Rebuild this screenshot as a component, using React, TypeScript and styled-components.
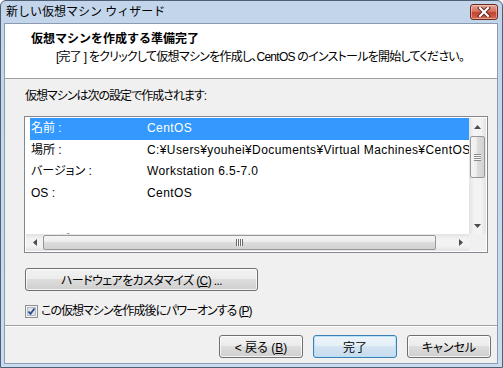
import React from 'react';
import styled, { createGlobalStyle } from 'styled-components';

const GlobalStyle = createGlobalStyle`
  html, body { margin: 0; padding: 0; background: #fff; }
  body {
    font-family: "Liberation Sans", "Noto Sans CJK JP", sans-serif;
    font-size: 12px;
    color: #000;
  }
`;

const rows = [
  { label: '名前 :', value: 'CentOS', selected: true },
  { label: '場所 :', value: 'C:¥Users¥youhei¥Documents¥Virtual Machines¥CentOS' },
  { label: 'バージョン :', value: 'Workstation 6.5-7.0' },
  { label: 'OS :', value: 'CentOS' },
  { label: '', value: '' },
  { label: '　　 ゲスト', value: '', clipped: true },
];

const Arrow = ({ dir }: { dir: 'up' | 'down' | 'left' | 'right' }) => {
  const pts = {
    up: '0,4 3.5,0 7,4',
    down: '0,0 3.5,4 7,0',
    left: '4,0 0,3.5 4,7',
    right: '0,0 4,3.5 0,7',
  }[dir];
  const vertical = dir === 'up' || dir === 'down';
  return (
    <svg width={vertical ? 7 : 4} height={vertical ? 4 : 7}>
      <polygon points={pts} fill="#4d4d4d" />
    </svg>
  );
};

const App = () => (
  <>
    <GlobalStyle />
    <Window>
      <TitleBar>
        <TitleText>新しい仮想マシン ウィザード</TitleText>
        <CloseButton>
          <svg width="14" height="10" viewBox="0 0 14 10">
            <path d="M3 1 L11 9 M11 1 L3 9" stroke="#5a1f17" strokeWidth="4" strokeLinecap="square" />
            <path d="M3 1 L11 9 M11 1 L3 9" stroke="#fff" strokeWidth="2.2" strokeLinecap="square" />
          </svg>
        </CloseButton>
      </TitleBar>
      <Inner>
        <Header>
          <HeaderTitle>仮想マシンを作成する準備完了</HeaderTitle>
          <HeaderText>[完了 ] をクリックして仮想マシンを作成し、CentOS のインストールを開始してください。</HeaderText>
        </Header>
        <Body>
          <Caption>仮想マシンは次の設定で作成されます:</Caption>
          <ListBox>
            <Rows>
              {rows.map((r, i) => (
                <Row key={i} $selected={r.selected} $clipped={r.clipped}>
                  <span>{r.label}</span>
                  <Value>{r.value}</Value>
                </Row>
              ))}
            </Rows>
            <VScroll>
              <ArrowCell><Arrow dir="up" /></ArrowCell>
              <VThumb>
                <GripV />
              </VThumb>
              <Track />
              <ArrowCell><Arrow dir="down" /></ArrowCell>
            </VScroll>
            <HScroll>
              <ArrowCell><Arrow dir="left" /></ArrowCell>
              <HThumb>
                <GripH />
              </HThumb>
              <Track />
              <ArrowCell><Arrow dir="right" /></ArrowCell>
            </HScroll>
            <Corner />
          </ListBox>
          <PushButton $width={233} $tight>
            ハードウェアをカスタマイズ (<u>C</u>) ...
          </PushButton>
          <CheckRow>
            <svg width="13" height="13" viewBox="0 0 13 13">
              <rect x="0.5" y="0.5" width="12" height="12" fill="#f4f4f4" stroke="#8e8f8f" />
              <rect x="2.5" y="2.5" width="8" height="8" fill="#dfe3ea" stroke="#b3b8c2" />
              <path d="M3.5 6.5 L5.5 8.8 L9.5 3.5" stroke="#2c4a8f" strokeWidth="1.8" fill="none" />
            </svg>
            <span>この仮想マシンを作成後にパワーオンする (<u>P</u>)</span>
          </CheckRow>
        </Body>
        <Footer>
          <PushButton $width={84}>&lt; 戻る (<u>B</u>)</PushButton>
          <PushButton $width={84} $default>完了</PushButton>
          <PushButton $width={84}>キャンセル</PushButton>
        </Footer>
      </Inner>
    </Window>
  </>
);

export default App;

const Window = styled.div`
  width: 503px;
  height: 368px;
  box-sizing: border-box;
  display: flex;
  flex-direction: column;
  background: linear-gradient(#c3d5ea, #cadcf0);
  border: 1px solid #4f5f74;
  border-radius: 6px 6px 0 0;
  padding: 0 4px 3px 3px;
`;

const TitleBar = styled.div`
  height: 22px;
  display: flex;
  align-items: flex-start;
  flex-shrink: 0;
`;

const TitleText = styled.div`
  padding-left: 2px;
  line-height: 22px;
  color: #000;
`;

const CloseButton = styled.div`
  margin-left: auto;
  margin-top: 3px;
  width: 28px;
  height: 16px;
  box-sizing: border-box;
  border: 1px solid #6d2a22;
  border-radius: 3px;
  background: linear-gradient(#e4a596, #d47461 45%, #c2432f 55%, #d36a4f);
  box-shadow: inset 0 0 0 1px rgba(255, 220, 210, 0.5);
  display: flex;
  align-items: center;
  justify-content: center;
`;

const Inner = styled.div`
  flex: 1;
  display: flex;
  flex-direction: column;
  background: #f0f0f0;
  border: 1px solid #8b9cb2;
  font-feature-settings: "palt";
`;

const Header = styled.div`
  height: 55px;
  flex-shrink: 0;
  box-sizing: border-box;
  background: #fff;
  border-bottom: 1px solid #a0a0a0;
  padding: 7px 0 0 26px;
`;

const HeaderTitle = styled.div`
  font-weight: bold;
  line-height: 16px;
  font-feature-settings: normal;
`;

const HeaderText = styled.div`
  margin: 2px 0 0 25px;
  line-height: 16px;
  white-space: nowrap;
  letter-spacing: -0.75px;
`;

const Body = styled.div`
  flex: 1;
  display: flex;
  flex-direction: column;
  align-items: flex-start;
  padding: 9px 0 0 20px;
`;

const Caption = styled.div`
  line-height: 16px;
  letter-spacing: -1px;
`;

const ListBox = styled.div`
  margin: 12px 0 0 -1px;
  width: 464px;
  height: 137px;
  box-sizing: border-box;
  border: 1px solid #828790;
  padding: 1px;
  background: #fff;
  display: grid;
  grid-template-columns: 1fr 17px;
  grid-template-rows: 1fr 17px;
`;

const Rows = styled.div`
  overflow: hidden;
  padding-left: 4px;
`;

const Row = styled.div<{ $selected?: boolean; $clipped?: boolean }>`
  display: grid;
  grid-template-columns: 116px 1fr;
  height: 21.5px;
  line-height: 21.5px;
  padding-left: 1px;
  margin-top: ${(p) => (p.$clipped ? '4px' : '0')};
  white-space: nowrap;
  overflow: hidden;
  background: ${(p) => (p.$selected ? '#3399ff' : 'transparent')};
  color: ${(p) => (p.$selected ? '#fff' : '#000')};
`;

const Value = styled.span`
  letter-spacing: 0.4px;
`;

const VScroll = styled.div`
  display: grid;
  grid-template-rows: 17px 43px 1fr 17px;
  background: linear-gradient(90deg, #e3e3e3, #f3f3f3 30%, #f3f3f3 70%, #e3e3e3);
`;

const HScroll = styled.div`
  display: grid;
  grid-template-columns: 17px 393px 1fr 17px;
  background: linear-gradient(#e3e3e3, #f3f3f3 30%, #f3f3f3 70%, #e3e3e3);
`;

const Corner = styled.div`
  background: #f0f0f0;
`;

const ArrowCell = styled.div`
  display: flex;
  align-items: center;
  justify-content: center;
`;

const Track = styled.div``;

const VThumb = styled.div`
  margin: 1px 1px 0;
  border: 1px solid #979797;
  border-radius: 2px;
  background: linear-gradient(90deg, #f4f4f4, #ececec 50%, #dcdcdc 50%, #d2d2d2);
  display: flex;
  align-items: center;
  justify-content: center;
`;

const HThumb = styled.div`
  margin: 1px 0;
  border: 1px solid #979797;
  border-radius: 2px;
  background: linear-gradient(#f4f4f4, #ececec 50%, #dcdcdc 50%, #d2d2d2);
  display: flex;
  align-items: center;
  justify-content: center;
`;

const GripV = styled.div`
  width: 7px;
  height: 7px;
  background: repeating-linear-gradient(#8a8a8a 0 1px, #fafafa 1px 2px);
`;

const GripH = styled.div`
  width: 7px;
  height: 7px;
  background: repeating-linear-gradient(90deg, #6a6a6a 0 1px, #fafafa 1px 2px);
`;

const PushButton = styled.button<{ $width: number; $default?: boolean; $tight?: boolean }>`
  width: ${(p) => p.$width}px;
  height: 23px;
  box-sizing: border-box;
  padding: 0;
  font: inherit;
  font-feature-settings: "palt";
  letter-spacing: ${(p) => (p.$tight ? '-0.6px' : 'normal')};
  color: #000;
  border: 1px solid ${(p) => (p.$default ? '#3c7fb1' : '#707070')};
  border-radius: 3px;
  background: ${(p) =>
    p.$default
      ? 'linear-gradient(#edf4fa, #e4eef7 50%, #d3e4f2 50%, #c6dbee)'
      : 'linear-gradient(#f2f2f2, #ebebeb 50%, #dddddd 50%, #cfcfcf)'};
  box-shadow: inset 0 0 0 1px ${(p) => (p.$default ? 'rgba(180, 225, 250, 0.9)' : 'rgba(255, 255, 255, 0.75)')};
  white-space: nowrap;

  ${Body} > & {
    margin-top: 15px;
  }
`;

const CheckRow = styled.div`
  margin-top: 13px;
  display: flex;
  align-items: center;
  gap: 3px;
  line-height: 14px;
  letter-spacing: -1px;
`;

const Footer = styled.div`
  flex-shrink: 0;
  display: flex;
  justify-content: flex-end;
  gap: 10px;
  border-top: 1px solid #a0a0a0;
  box-shadow: inset 0 1px 0 #fff;
  padding: 9px 6px 5px 0;
`;
